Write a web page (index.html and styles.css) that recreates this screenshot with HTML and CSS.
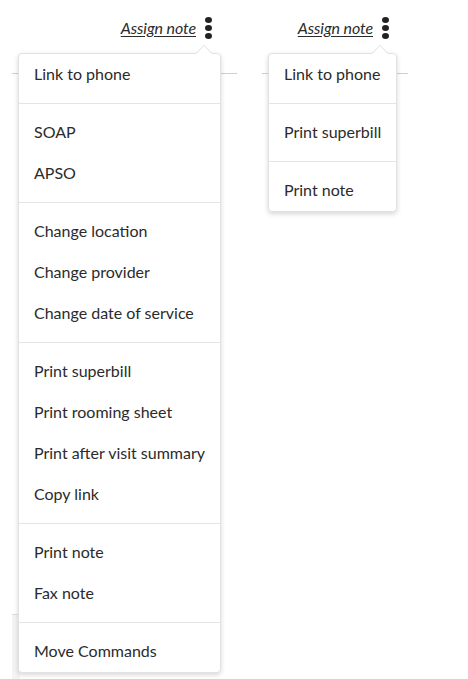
FILE: index.html
```html
<!DOCTYPE html>
<html lang="en">
<head>
<meta charset="utf-8">
<title>Note menus</title>
<link rel="stylesheet" href="styles.css">
</head>
<body>
<div class="page">
  <section class="col col-a">
    <header class="bar">
      <a class="assign" href="#">Assign note</a>
      <button class="kebab" aria-label="More"><i></i><i></i><i></i></button>
    </header>
    <div class="body">
      <div class="rule"></div>
      <div class="foot"></div>
      <ul class="menu">
        <li class="item">Link to phone</li>
        <li class="sep"></li>
        <li class="item">SOAP</li>
        <li class="item">APSO</li>
        <li class="sep"></li>
        <li class="item">Change location</li>
        <li class="item">Change provider</li>
        <li class="item">Change date of service</li>
        <li class="sep"></li>
        <li class="item">Print superbill</li>
        <li class="item">Print rooming sheet</li>
        <li class="item">Print after visit summary</li>
        <li class="item">Copy link</li>
        <li class="sep"></li>
        <li class="item">Print note</li>
        <li class="item">Fax note</li>
        <li class="sep"></li>
        <li class="item">Move Commands</li>
      </ul>
    </div>
  </section>
  <section class="col col-b">
    <header class="bar">
      <a class="assign" href="#">Assign note</a>
      <button class="kebab" aria-label="More"><i></i><i></i><i></i></button>
    </header>
    <div class="body">
      <div class="rule"></div>
      <ul class="menu">
        <li class="item">Link to phone</li>
        <li class="sep"></li>
        <li class="item">Print superbill</li>
        <li class="sep"></li>
        <li class="item">Print note</li>
      </ul>
    </div>
  </section>
</div>
</body>
</html>
```

FILE: styles.css
```css
* { box-sizing: border-box; }
html, body { margin: 0; padding: 0; background: #fff; }
body {
  font-family: Lato, "Open Sans", sans-serif;
  color: #333;
  width: 468px;
  height: 679px;
  overflow: hidden;
}
.page {
  display: flex;
  gap: 25px;
  padding-left: 12px;
}
.col { position: relative; }
.col-a { width: 225px; }
.col-b { width: 146px; }
.col-a .bar { padding-right: 25px; }
.col-b .bar { padding-right: 19px; }
.bar {
  height: 46px;
  display: flex;
  justify-content: flex-end;
  align-items: center;
  gap: 9px;
  padding-top: 8px;
}
.assign {
  font-style: italic;
  font-size: 16px;
  letter-spacing: -0.1px;
  color: #2b2b2b;
  text-decoration: underline;
  text-underline-offset: 2px;
}
.kebab {
  border: 0;
  background: none;
  padding: 0;
  display: flex;
  flex-direction: column;
  gap: 2px;
  width: 7px;
  margin-top: 2px;
}
.kebab i {
  display: block;
  width: 7px;
  height: 6px;
  border-radius: 50%;
  background: #222;
}
.body {
  position: relative;
  padding-top: 27px;
}
.rule {
  height: 1px;
  background: #cfcfcf;
}
.foot {
  margin-top: 540px;
  height: 66px;
  width: 8px;
  border-top: 1px solid #ddd;
  border-bottom: 1px solid #999;
  background: #f4f4f4;
}
.menu {
  position: absolute;
  top: 7px;
  left: 6px;
  width: max-content;
  margin: 0;
  padding: 0;
  list-style: none;
  background: #fff;
  border: 1px solid #e2e2e2;
  border-radius: 4px;
  box-shadow: 0 2px 5px rgba(0, 0, 0, 0.16);
}
.menu::before,
.menu::after {
  content: "";
  position: absolute;
  right: 8px;
  width: 0;
  height: 0;
  border-left: 8px solid transparent;
  border-right: 8px solid transparent;
}
.menu::before {
  top: -9px;
  border-bottom: 8px solid #dcdcdc;
}
.menu::after {
  top: -8px;
  border-bottom: 8px solid #fff;
}
.item {
  font-size: 16px;
  line-height: 20px;
  padding: 10px 15px 11px;
  white-space: nowrap;
  color: #2b2b2b;
}
.sep {
  height: 1px;
  margin: 8px 0;
  background: #e4e4e4;
}
```
